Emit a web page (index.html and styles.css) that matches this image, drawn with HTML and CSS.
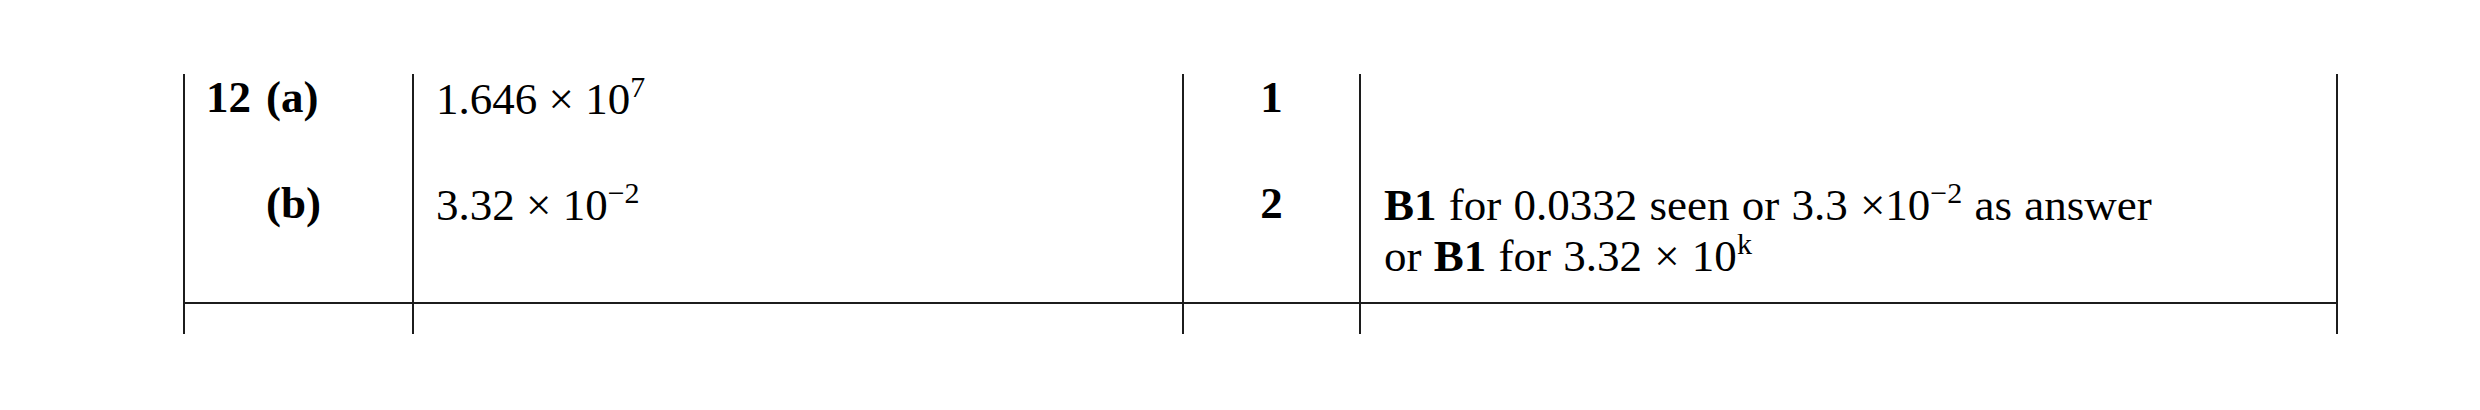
FILE: index.html
```html
<!DOCTYPE html>
<html lang="en">
<head>
<meta charset="utf-8">
<title>Mark scheme – Question 12</title>
<link rel="stylesheet" href="styles.css">
</head>
<body>
<div class="scheme">
  <div class="cell q row-a"><span class="qnum">12</span><span class="part">(a)</span></div>
  <div class="cell ans row-a">1.646 × 10<sup>7</sup></div>
  <div class="cell mark row-a">1</div>
  <div class="cell rem row-a"></div>

  <div class="cell q row-b"><span class="qnum"></span><span class="part">(b)</span></div>
  <div class="cell ans row-b">3.32 × 10<sup>−2</sup></div>
  <div class="cell mark row-b">2</div>
  <div class="cell rem row-b"><p class="line"><b>B1</b> for 0.0332 seen or 3.3 ×10<sup>−2</sup> as answer</p><p class="line">or <b>B1</b> for 3.32 × 10<sup>k</sup></p></div>

  <div class="cell row-c"></div>
  <div class="cell row-c"></div>
  <div class="cell row-c"></div>
  <div class="cell rem row-c"></div>
</div>
</body>
</html>
```
FILE: styles.css
```css
html, body {
  margin: 0;
  padding: 0;
  background: #ffffff;
}

body {
  font-family: "Liberation Serif", "Times New Roman", serif;
  font-size: 45px;
  color: #000000;
}

.scheme {
  display: grid;
  grid-template-columns: 229px 770px 177px 979px;
  grid-template-rows: 106px 124px 30px;
  margin: 74px 0 0 183px;
  width: max-content;
}

.cell {
  box-sizing: border-box;
  border-left: 2px solid #1c1c1c;
  line-height: 46px;
}

.rem {
  border-right: 2px solid #1c1c1c;
}

.row-b {
  border-bottom: 2px solid #1c1c1c;
}

.q {
  display: flex;
  padding-left: 21px;
  font-weight: bold;
}

.qnum {
  width: 60px;
}

.ans {
  padding: 2px 0 0 22px;
}

.mark {
  text-align: center;
  font-weight: bold;
}

.rem {
  padding: 0 0 0 23px;
}

.line {
  margin: 0;
  line-height: 51px;
  word-spacing: 1px;
}

sup {
  font-size: 30px;
  vertical-align: 17px;
  line-height: 0;
}
```
